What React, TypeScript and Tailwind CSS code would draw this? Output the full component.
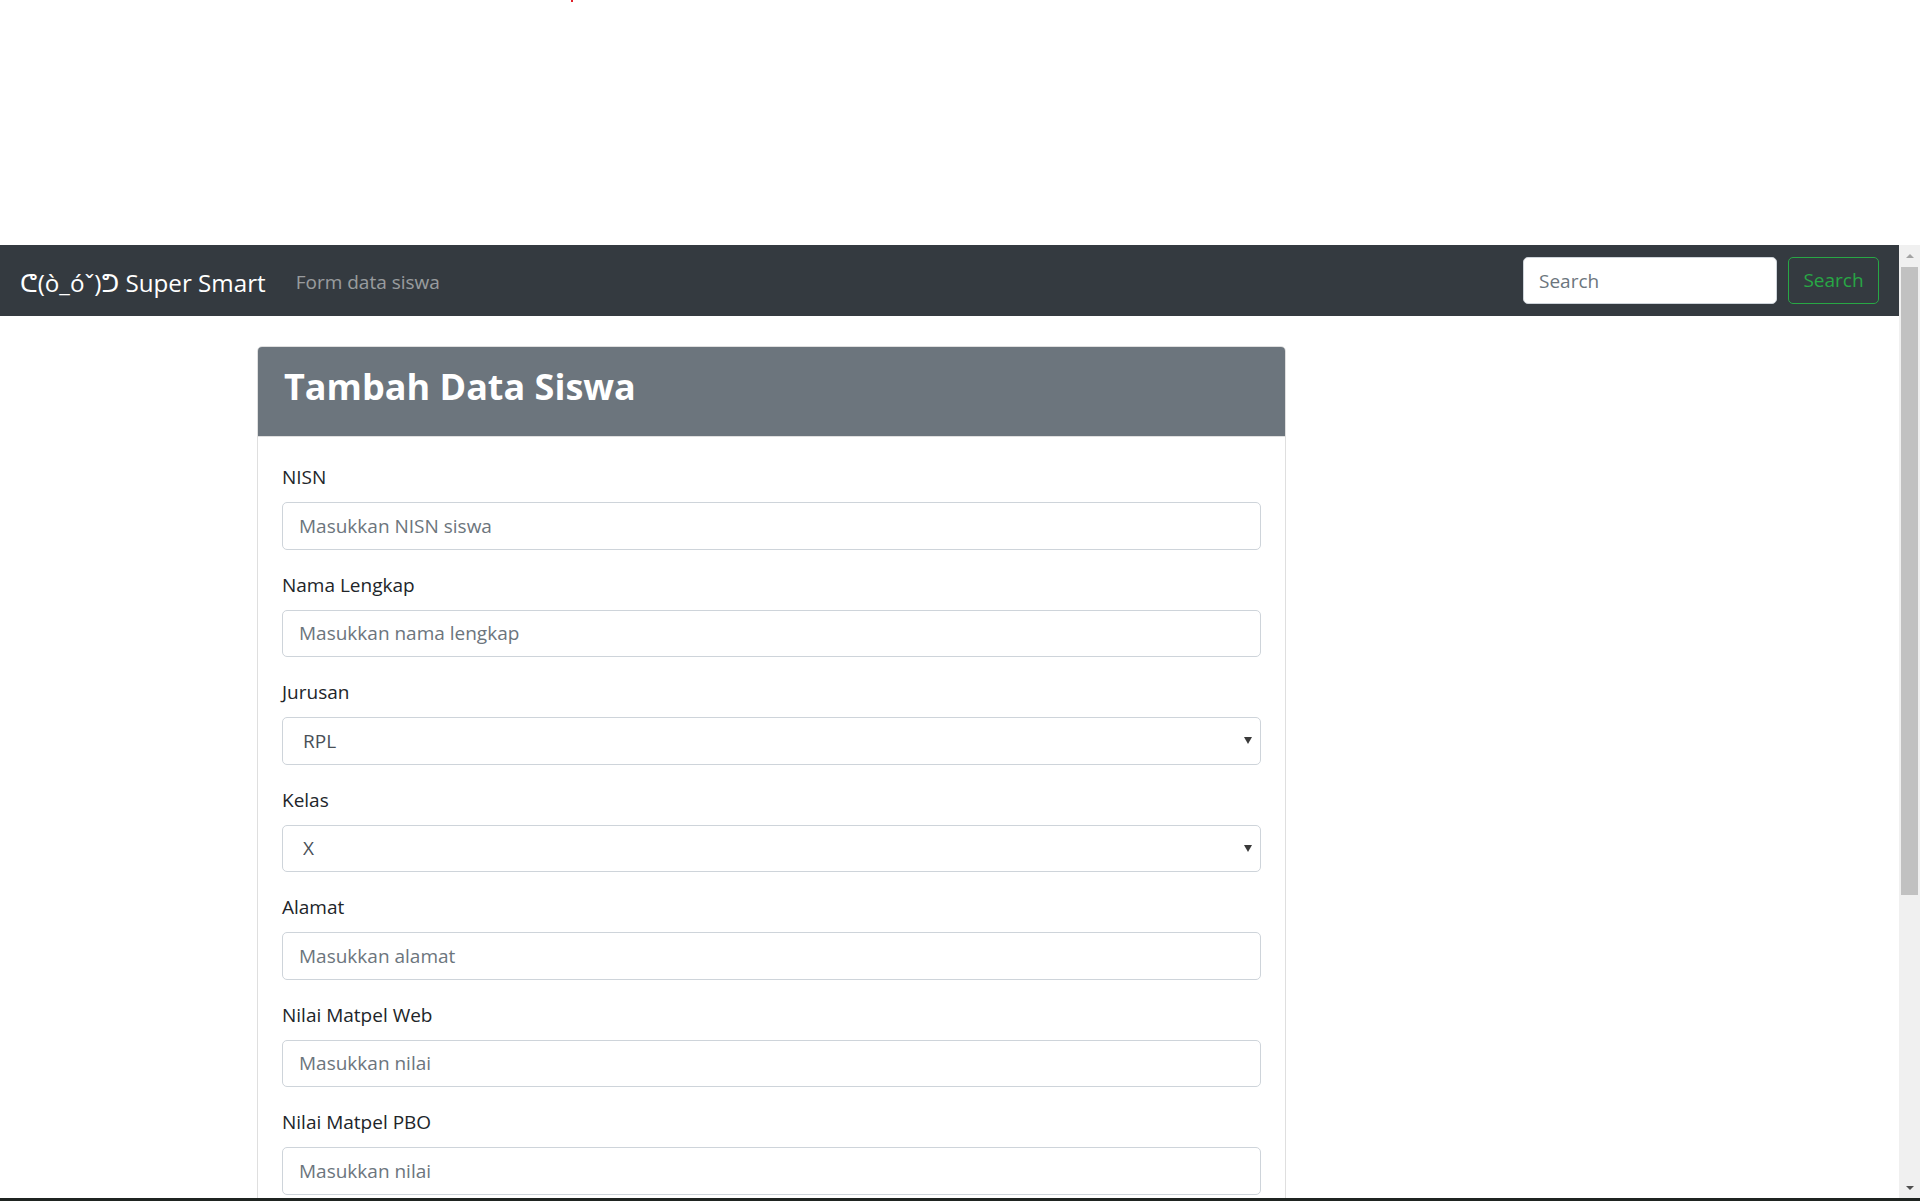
import { useState } from 'react';

type Field = {
  label: string;
  type: 'input' | 'select';
  placeholder?: string;
  options?: string[];
};

const FIELDS: Field[] = [
  { label: 'NISN', type: 'input', placeholder: 'Masukkan NISN siswa' },
  { label: 'Nama Lengkap', type: 'input', placeholder: 'Masukkan nama lengkap' },
  { label: 'Jurusan', type: 'select', options: ['RPL', 'TKJ', 'MM'] },
  { label: 'Kelas', type: 'select', options: ['X', 'XI', 'XII'] },
  { label: 'Alamat', type: 'input', placeholder: 'Masukkan alamat' },
  { label: 'Nilai Matpel Web', type: 'input', placeholder: 'Masukkan nilai' },
  { label: 'Nilai Matpel PBO', type: 'input', placeholder: 'Masukkan nilai' },
];

const font = "font-['Open_Sans','Noto_Sans',sans-serif]";

export default function App() {
  const [search, setSearch] = useState('');

  return (
    <div className={`h-[1201px] w-[1920px] overflow-hidden flex flex-col bg-white ${font}`}>
      {/* top blank strip */}
      <div className="h-[245px] shrink-0 pl-[571px]">
        <div className="w-[2px] h-[2px] bg-[#e0202a]" />
      </div>

      <div className="flex flex-1 min-h-0">
        {/* page */}
        <div className="flex-1 min-w-0 overflow-hidden">
          <nav className="h-[71px] bg-[#343a40] flex items-center px-5">
            <a className="mt-[3px] text-[24.2px] leading-[37px] text-white mr-5 font-['Open_Sans','DejaVu_Sans',sans-serif] whitespace-nowrap">
              ᕦ(ò_óˇ)ᕤ Super Smart
            </a>
            <a className="mt-[3px] text-[19px] px-[10px] text-white/50">Form data siswa</a>
            <div className="ml-auto flex items-center">
              <input
                value={search}
                onChange={(e) => setSearch(e.target.value)}
                placeholder="Search"
                className="w-[254px] h-[47px] rounded-[5px] bg-white border border-[#ced4da] px-[15px] text-[19px] text-[#495057] placeholder:text-[#6c757d] outline-none"
              />
              <button className="ml-[11px] w-[91px] h-[47px] rounded-[5px] border border-[#28a745] text-[#28a745] text-[19px]">
                Search
              </button>
            </div>
          </nav>

          <div className="pl-[257px] pt-[30px]">
            <div className="w-[1029px] border border-[#dfdfdf] rounded-[5px]">
              <div className="bg-[#6c757d] rounded-t-[4px] px-[26px] pt-[10px] pb-[20px] border-b border-[#dfdfdf]">
                <h1 className="text-[36px] leading-[59px] font-bold text-white">Tambah Data Siswa</h1>
              </div>
              <div className="px-[24px] pt-[25px]">
                {FIELDS.map((f) => (
                  <div key={f.label} className="mb-[20px]">
                    <label className="block text-[19px] leading-[30px] text-[#212529] mb-[10px]">{f.label}</label>
                    {f.type === 'input' ? (
                      <input
                        placeholder={f.placeholder}
                        className="w-full h-[47.5px] rounded-[5px] border border-[#ced4da] px-[16px] text-[19px] text-[#495057] placeholder:text-[#6c757d] outline-none"
                      />
                    ) : (
                      <div className="relative">
                        <select className="w-full h-[47.5px] rounded-[5px] border border-[#ced4da] pl-[20px] pr-8 text-[19px] text-[#495057] bg-white appearance-none outline-none">
                          {f.options!.map((o) => (
                            <option key={o}>{o}</option>
                          ))}
                        </select>
                        <span className="absolute right-[9px] top-[20px] w-0 h-0 border-l-[4px] border-r-[4px] border-t-[7px] border-l-transparent border-r-transparent border-t-[#3a3a3a] pointer-events-none" />
                      </div>
                    )}
                  </div>
                ))}
              </div>
            </div>
          </div>
        </div>

        {/* scrollbar */}
        <div className="w-[21px] shrink-0 bg-[#f0f0f0] flex flex-col items-center">
          <div className="h-[22px] flex items-center justify-center">
            <span className="w-0 h-0 border-l-[4px] border-r-[4px] border-b-[4px] border-l-transparent border-r-transparent border-b-[#a3a3a3]" />
          </div>
          <div className="w-[17px] h-[628px] bg-[#c1c1c1]" />
          <div className="flex-1" />
          <div className="h-[20px] flex items-center justify-center">
            <span className="w-0 h-0 border-l-[4px] border-r-[4px] border-t-[4px] border-l-transparent border-r-transparent border-t-[#505050]" />
          </div>
        </div>
      </div>

      <div className="h-[3px] shrink-0 bg-[#1f2421]" />
    </div>
  );
}
